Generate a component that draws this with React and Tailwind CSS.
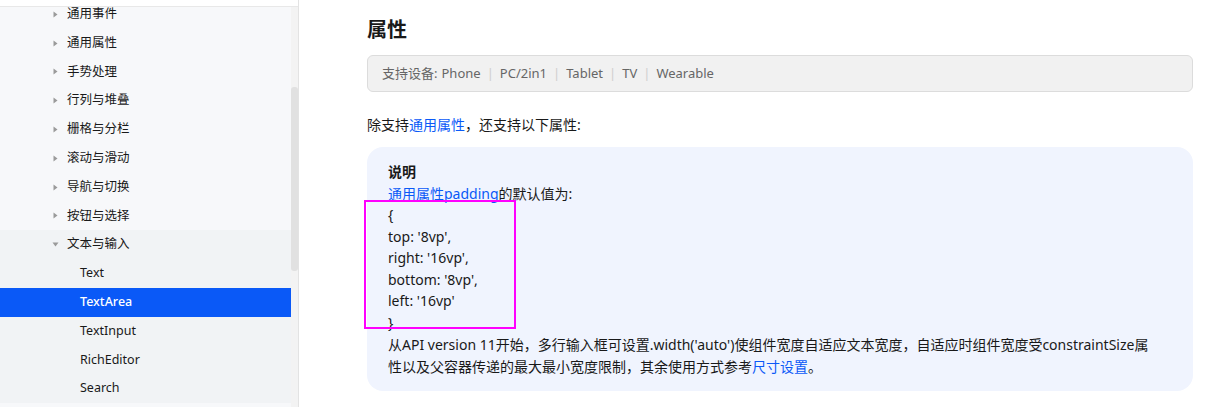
import React from 'react';

const groups = [
  '通用事件',
  '通用属性',
  '手势处理',
  '行列与堆叠',
  '栅格与分栏',
  '滚动与滑动',
  '导航与切换',
  '按钮与选择',
];

const children = ['Text', 'TextArea', 'TextInput', 'RichEditor', 'Search'];

const devices = ['Phone', 'PC/2in1', 'Tablet', 'TV', 'Wearable'];

const Caret = ({ open }) => (
  <svg width="7" height="7" viewBox="0 0 7 7" className="shrink-0">
    {open ? <path d="M0.5 1.5 L6.5 1.5 L3.5 5.5 Z" fill="#9a9a9a" /> : <path d="M1.5 0.5 L5.5 3.5 L1.5 6.5 Z" fill="#9a9a9a" />}
  </svg>
);

const Sidebar = () => (
  <aside className="w-[299px] shrink-0 h-full flex flex-col border-r border-[#e3e3e3] bg-[#f7f8fa]">
    <div className="h-[7px] shrink-0 bg-white border-b border-[#e8e8e8]" />
    <div className="flex flex-1 min-h-0">
      <div className="flex-1 overflow-hidden">
        <ul className="-mt-[7px] text-[12.5px] text-[#191919]">
          {groups.map((g) => (
            <li key={g} className="h-[28.8px] flex items-center gap-[8px] pl-[52px]">
              <Caret />
              <span>{g}</span>
            </li>
          ))}
          <li className="bg-[#f1f3f5]">
            <div className="h-[28.8px] flex items-center gap-[8px] pl-[52px]">
              <Caret open />
              <span>文本与输入</span>
            </div>
            <ul>
              {children.map((c) => (
                <li
                  key={c}
                  className={
                    c === 'TextArea'
                      ? 'h-[28.8px] flex items-center pl-[80px] bg-[#0a59f7] text-white font-medium'
                      : 'h-[28.8px] flex items-center pl-[80px]'
                  }
                >
                  {c}
                </li>
              ))}
            </ul>
          </li>
        </ul>
      </div>
      <div className="w-[7px] shrink-0 bg-[#f3f3f3] pt-[80px]">
        <div className="h-[184px] rounded-[3px] bg-[#e1e1e1]" />
      </div>
    </div>
  </aside>
);

const Content = () => (
  <main className="flex-1 min-w-0 pl-[68px] pr-[13px] pt-[16px] text-[#191919]">
    <h2 className="text-[20px] leading-[28px] font-bold">属性</h2>
    <div className="mt-[11px] h-[37px] flex items-center px-[14px] rounded-[6px] border border-[#dcdcdc] bg-[#f1f1f1] text-[13px] text-[#666]">
      <span className="mr-[4px]">支持设备:</span>
      {devices.map((d, i) => (
        <span key={d} className="flex items-center">
          {i > 0 && <span className="mx-[6px] text-[#cfcfcf]">|</span>}
          <span>{d}</span>
        </span>
      ))}
    </div>
    <p className="mt-[22px] text-[14px] leading-[22px]">
      除支持<span className="text-[#0a59f7]">通用属性</span>，还支持以下属性:
    </p>
    <div className="relative mt-[11px] rounded-[16px] bg-[#f0f4fe] pl-[21px] pr-[40px] pt-[14px] pb-[14px] text-[14px] leading-[21.5px]">
      <p className="font-bold">说明</p>
      <p>
        <span className="text-[#0a59f7]">通用属性padding</span>的默认值为:
      </p>
      <p>{'{'}</p>
      <p>top: '8vp',</p>
      <p>right: '16vp',</p>
      <p>bottom: '8vp',</p>
      <p>left: '16vp'</p>
      <p>{'}'}</p>
      <p className="mt-[1px]">
        从API version 11开始，多行输入框可设置.width('auto')使组件宽度自适应文本宽度，自适应时组件宽度受constraintSize属性以及父容器传递的最大最小宽度限制，其余使用方式参考<span className="text-[#0a59f7]">尺寸设置</span>。
      </p>
      <div className="absolute left-[-3px] top-[53px] w-[152px] h-[129px] border-2 border-[#ff00ff] pointer-events-none" />
    </div>
  </main>
);

export default function App() {
  return (
    <div
      className="flex h-[407px] w-[1206px] overflow-hidden bg-white"
      style={{ fontFamily: '"Noto Sans", "Noto Sans CJK SC", sans-serif' }}
    >
      <Sidebar />
      <Content />
    </div>
  );
}
